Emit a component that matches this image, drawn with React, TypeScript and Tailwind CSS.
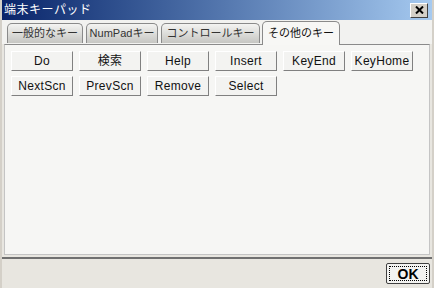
import React from 'react';

const font = { fontFamily: '"Liberation Sans", "Noto Sans CJK JP", sans-serif' };

const tabs = [
  { label: '一般的なキー', w: 'w-[76px]' },
  { label: 'NumPadキー', w: 'w-[72px]' },
  { label: 'コントロールキー', w: 'w-[99px]' },
];
const rows = [
  ['Do', '検索', 'Help', 'Insert', 'KeyEnd', 'KeyHome'],
  ['NextScn', 'PrevScn', 'Remove', 'Select'],
];

function KeyButton({ label }: { label: string }) {
  return (
    <button className="w-[62px] h-[20px] bg-[#f3f3f1] border border-t-white border-l-white border-b-[#808080] border-r-[#808080] text-[12px] leading-none text-[#111] tracking-[0.3px] flex items-center justify-center">
      {label}
    </button>
  );
}

export default function App() {
  return (
    <div className="w-[434px] h-[288px] flex flex-col bg-[#e8e6e0] border-l-2 border-r-2 border-[#d4d0c8] overflow-hidden" style={font}>
      {/* Title bar */}
      <div className="h-[20px] flex items-center justify-between pl-[2px] pr-[4px] bg-gradient-to-r from-[#0a246a] to-[#a6caf0]">
        <span className="text-white text-[12px] leading-none tracking-[0.5px]">端末キーパッド</span>
        <button className="w-[18px] h-[15px] bg-[#d4d0c8] border border-t-white border-l-white border-b-[#404040] border-r-[#404040] flex items-center justify-center">
          <svg width="9" height="8" viewBox="0 0 9 8">
            <path d="M1 0.5 L8 7.5 M8 0.5 L1 7.5" stroke="#000" strokeWidth="2" />
          </svg>
        </button>
      </div>

      {/* Tabs */}
      <div className="flex items-end pl-[5px] pt-[1px] bg-[#f2f2f0]">
        {tabs.map((t) => (
          <div
            key={t.label}
            className={`${t.w} shrink-0 h-[20px] mr-[3px] mb-px flex items-center justify-center whitespace-nowrap bg-gradient-to-b from-[#f4f4f2] to-[#c6c6c2] border border-b-0 border-[#8a8a8a] rounded-t-[5px] text-[11px] text-[#333]`}
          >
            {t.label}
          </div>
        ))}
        <div className="w-[78px] shrink-0 h-[24px] -ml-px -mb-px z-10 flex items-center justify-center whitespace-nowrap bg-[#f7f7f5] border border-b-0 border-[#8a8a8a] rounded-t-[5px] text-[11px] text-[#111]">
          その他のキー
        </div>
      </div>

      {/* Panel */}
      <div className="h-[211px] mx-[2px] bg-[#f6f6f4] border border-[#c4c4c4] border-t-[#8a8a8a] pt-[6px] pl-[6px] flex flex-col gap-[5px]">
        {rows.map((r, i) => (
          <div key={i} className="flex gap-[6px]">
            {r.map((l) => (
              <KeyButton key={l} label={l} />
            ))}
          </div>
        ))}
      </div>

      {/* Bottom bar */}
      <div className="flex-1 mt-[2px] border-t-2 border-[#707070] bg-[#e8e6e0] flex items-start justify-end pt-[4px] pr-[2px]">
        <button className="w-[44px] h-[21px] bg-[#f3f3f1] border border-[#404040] rounded-[2px] p-[2px]">
          <div className="w-full h-full border border-dotted border-black flex items-center justify-center text-[14px] font-bold leading-none text-black">
            OK
          </div>
        </button>
      </div>
    </div>
  );
}
